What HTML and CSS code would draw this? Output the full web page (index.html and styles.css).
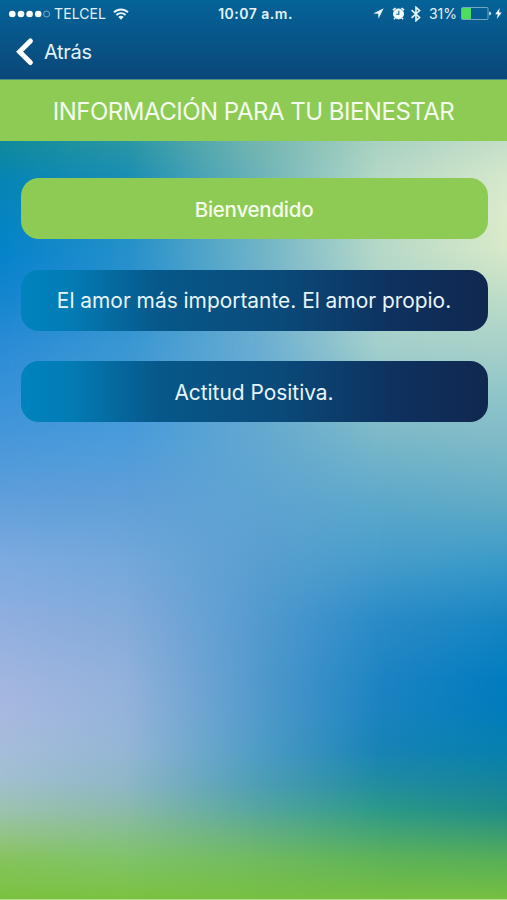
FILE: index.html
```html
<!DOCTYPE html>
<html lang="es">
<head>
  <meta charset="UTF-8">
  <title>Información para tu bienestar</title>
  <link rel="stylesheet" href="styles.css">
</head>
<body>

  <div class="fondo">
    <div class="capa capa1"></div>
    <div class="capa capa2"></div>
    <div class="capa capa3"></div>
    <div class="capa capa4"></div>
    <div class="capa capa5"></div>
  </div>

  <header class="cabecera">
    <div class="estado">
      <div class="estado-izq">
        <svg class="senal" width="41" height="10" viewBox="0 0 41 10" fill="#fff">
          <circle cx="3.3" cy="5" r="3.3"/>
          <circle cx="12" cy="5" r="3.3"/>
          <circle cx="20.6" cy="5" r="3.3"/>
          <circle cx="29.2" cy="5" r="3.3"/>
          <circle cx="37.6" cy="5" r="3" fill="none" stroke="#a9cbe0" stroke-width=".7"/>
        </svg>
        <span class="operador">TELCEL</span>
        <svg width="16" height="12" viewBox="0 0 16 12" fill="none" stroke="#e8f5fb" stroke-width="1.9">
          <path d="M1 4.3a10 10 0 0 1 14 0"/>
          <path d="M3.4 7a6.6 6.6 0 0 1 9.2 0"/>
          <path d="M8 11.7L5.3 9a3.9 3.9 0 0 1 5.4 0z" fill="#e8f5fb" stroke="none"/>
        </svg>
      </div>
      <span class="hora">10:07 a.m.</span>
      <div class="estado-der">
        <svg width="11" height="11" viewBox="0 0 11 11" fill="#e8f5fb">
          <path d="M10.7.3L.2 5.5l5 .3.3 5z"/>
        </svg>
        <svg class="alarma" width="13" height="13" viewBox="0 0 13 13" fill="none" stroke="#f2fafd">
          <circle cx="6.5" cy="6.9" r="5" fill="#f2fafd"/>
          <path d="M.9 3.2L3.5 1M12.1 3.2L9.5 1M3 11l-1 1.2M10 11l1 1.2" stroke-width="1.6"/>
          <path d="M6.8 3.8v3.4H4.2" stroke="#0b6399" stroke-width="1.1"/>
        </svg>
        <svg class="bluetooth" width="10" height="16" viewBox="0 0 10 16" fill="none" stroke="#e8f5fb" stroke-width="1.6">
          <path d="M.6 4.2l8 7.2L5 14.7V1.3l3.6 3.3-8 7.2"/>
        </svg>
        <span class="porcentaje">31%</span>
        <svg width="31" height="13" viewBox="0 0 31 13">
          <rect x=".5" y=".5" width="26.5" height="12" rx="1" fill="none" stroke="#8fb9cf" stroke-width=".8"/>
          <rect x="1" y="1" width="9" height="11" fill="#4fdc63"/>
          <path d="M28.2 4.5q2 .3 2 2t-2 2z" fill="#d4e8f2"/>
        </svg>
        <svg class="rayo" width="7" height="11" viewBox="0 0 7 11" fill="#f2fafd">
          <path d="M4.7 0L.2 6.2h2.6L1.8 11l5-6.6H4z"/>
        </svg>
      </div>
    </div>
    <div class="nav">
      <svg width="18" height="30" viewBox="0 0 18 30" fill="none" stroke="#fff" stroke-width="5" stroke-linecap="round">
        <path d="M14.4 4L3.6 14.8 14.4 25.6"/>
      </svg>
      <a class="atras">Atrás</a>
    </div>
  </header>

  <h1 class="titulo">INFORMACIÓN PARA TU BIENESTAR</h1>

  <main class="lista">
    <button class="boton boton-verde">Bienvendido</button>
    <button class="boton">El amor más importante. El amor propio.</button>
    <button class="boton">Actitud Positiva.</button>
  </main>

</body>
</html>
```
FILE: styles.css
```css
* {
  box-sizing: border-box;
}

body {
  margin: 0;
  height: 900px;
  overflow: hidden;
  position: relative;
  font-family: Inter, "Liberation Sans", sans-serif;
  color: #f4fbee;
}

/* Fondo: columnas de color que se funden de izquierda a derecha */
.fondo {
  position: absolute;
  inset: 0;
  z-index: -1;
  border-bottom: 1px solid #b5dc91;
}

.capa {
  position: absolute;
  inset: 0;
}

.capa1 {
  background: linear-gradient(#108a9a 141px, #0585b5 180px, #0583cc 255px, #1586d0 300px, #2a8cd6 345px, #4496da 430px, #609fdb 500px, #7dabe0 560px, #90afe0 620px, #a2b6e0 680px, #a8b9e0 710px, #a6bddb 750px, #a2c0cf 780px, #9cc3b0 810px, #93c488 835px, #86c45c 860px, #7cc242 898px);
}

.capa2 {
  background: linear-gradient(#2a96a4 141px, #1b8eb2 175px, #2590cb 250px, #2a8fcf 300px, #3a97d2 345px, #489bdb 430px, #609fd8 500px, #73a8da 560px, #84abda 620px, #91b1db 680px, #94b3da 710px, #94b6d5 750px, #8db7c5 785px, #8bbaab 810px, #86bf89 835px, #7fc368 860px, #7cc242 898px);
  mask-image: linear-gradient(to right, transparent 0, #000 127px);
}

.capa3 {
  background: linear-gradient(#72b5b0 141px, #6bb2b8 175px, #6db2c8 250px, #68acd2 345px, #62a8d0 430px, #5ea4d2 500px, #5a9fd0 560px, #559bd0 620px, #549acd 680px, #549bcc 710px, #519dc6 750px, #509fb5 785px, #57a79f 810px, #66b17f 835px, #71bb60 860px, #78c043 898px);
  mask-image: linear-gradient(to right, transparent 127px, #000 254px);
}

.capa4 {
  background: linear-gradient(#a9d2c2 141px, #b5d8c6 175px, #b7d9c8 250px, #a4d0cb 345px, #7ebac8 430px, #5ea9cb 500px, #479dcb 560px, #2a8bc7 620px, #1d84c2 680px, #1b83c0 710px, #1783b5 750px, #218d9f 785px, #2c9988 810px, #47a671 835px, #5fb358 860px, #76bf42 898px);
  mask-image: linear-gradient(to right, transparent 254px, #000 380px);
}

.capa5 {
  background: linear-gradient(#c4dec9 141px, #d4e7cb 175px, #dbebcb 210px, #d8e9c8 250px, #bcdcc8 300px, #a8d1c8 345px, #8cc4c9 400px, #84bdc8 430px, #62acc5 500px, #3b9bc8 560px, #1785c2 620px, #007cbf 680px, #007bbb 710px, #0680ae 750px, #16859a 785px, #1f8c87 810px, #3c9d70 835px, #57af57 860px, #76bf42 898px);
  mask-image: linear-gradient(to right, transparent 380px, #000 507px);
}

/* Cabecera */
.cabecera {
  height: 80px;
  background: linear-gradient(#046398, #0b4779);
  border-bottom: 1px solid #4d8f80;
  color: #e3f2fa;
}

.estado {
  display: grid;
  grid-template-columns: 1fr auto 1fr;
  align-items: center;
  height: 27px;
  padding: 0 5px 0 9px;
  font-size: 14px;
}

.estado-izq,
.estado-der {
  display: flex;
  align-items: center;
}

.estado-der {
  justify-content: flex-end;
}

.operador {
  margin: 0 7px 0 4px;
  letter-spacing: 0.1px;
}

.hora {
  font-weight: 600;
  letter-spacing: 0.5px;
}

.alarma {
  margin-left: 8px;
}

.bluetooth {
  margin: 0 8px 0 6px;
}

.porcentaje {
  margin-right: 4px;
}

.rayo {
  margin-left: 3px;
}

.nav {
  display: flex;
  align-items: center;
  gap: 10px;
  height: 49px;
  padding-left: 16px;
}

.atras {
  font-size: 20px;
  letter-spacing: -0.3px;
}

.titulo {
  display: flex;
  align-items: center;
  justify-content: center;
  height: 61px;
  margin: 0;
  padding-top: 2px;
  background-color: #8dcb54;
  font-size: 24px;
  font-weight: 400;
  letter-spacing: -0.5px;
  white-space: nowrap;
}

/* Botones */
.lista {
  display: flex;
  flex-direction: column;
  gap: 30.7px;
  padding: 37px 19.5px 0 20.5px;
}

.boton {
  height: 61px;
  padding-top: 2px;
  border: none;
  border-radius: 18px;
  background: linear-gradient(to right, #0083bd 0%, #037bb4 11%, #07588a 29%, #0a4a79 55%, #0e315f 80%, #10284f 100%);
  color: #e8f5fb;
  font-family: inherit;
  font-size: 20.9px;
  white-space: nowrap;
}

.boton-verde {
  background: #8dcb54;
  color: #f6fdec;
  font-size: 20.5px;
  font-weight: 500;
  letter-spacing: -0.25px;
}
```
